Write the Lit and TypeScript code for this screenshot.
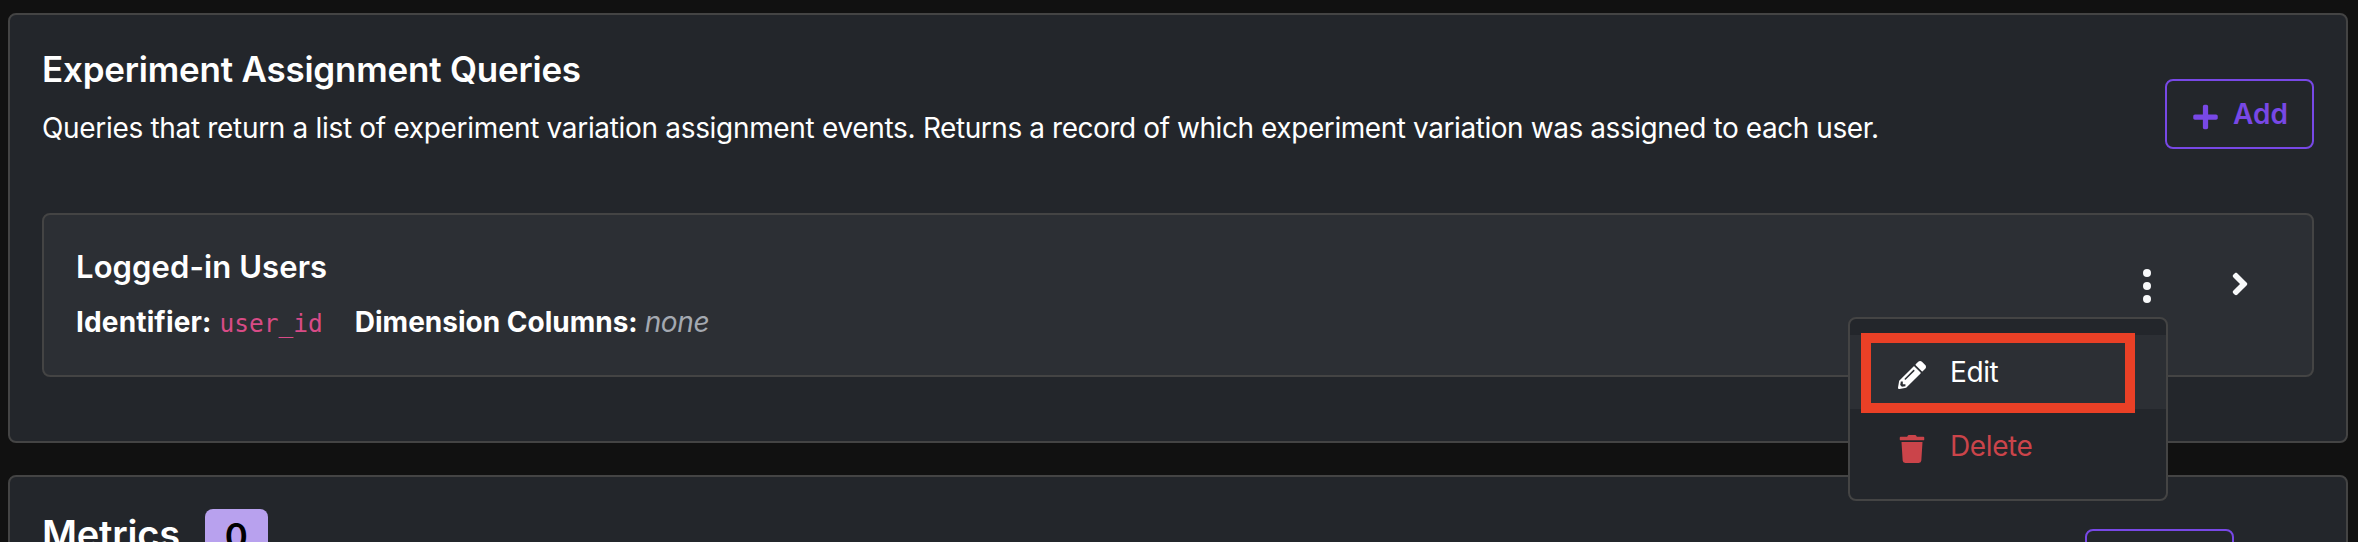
import { LitElement, html, css, svg } from "lit";
import { customElement } from "lit/decorators.js";

const icons = {
  plus: svg`<path d="M416 208H272V64c0-17.67-14.33-32-32-32h-32c-17.67 0-32 14.33-32 32v144H32c-17.67 0-32 14.33-32 32v32c0 17.67 14.33 32 32 32h144v144c0 17.67 14.33 32 32 32h32c17.67 0 32-14.33 32-32V304h144c17.67 0 32-14.33 32-32v-32c0-17.67-14.33-32-32-32z"/>`,
  pencil: svg`<path d="M497.9 142.1l-46.1 46.1c-4.7 4.7-12.3 4.7-17 0l-111-111c-4.7-4.7-4.7-12.3 0-17l46.1-46.1c18.7-18.7 49.1-18.7 67.9 0l60.1 60.1c18.8 18.7 18.8 49.1 0 67.9zM284.2 99.8L21.6 362.4.4 483.9c-2.9 16.4 11.4 30.6 27.8 27.8l121.5-21.3 262.6-262.6c4.7-4.7 4.7-12.3 0-17l-111-111c-4.8-4.7-12.4-4.7-17.1 0zM124.1 339.9c-5.5-5.5-5.5-14.3 0-19.8l154-154c5.5-5.5 14.3-5.5 19.8 0s5.5 14.3 0 19.8l-154 154c-5.5 5.5-14.3 5.5-19.8 0zM88 424h48v36.3l-64.5 11.3-31.1-31.1L51.7 376H88v48z"/>`,
  trash: svg`<path d="M432 32H312l-9.4-18.7A24 24 0 0 0 281.1 0H166.8a23.72 23.72 0 0 0-21.4 13.3L136 32H16A16 16 0 0 0 0 48v32a16 16 0 0 0 16 16h416a16 16 0 0 0 16-16V48a16 16 0 0 0-16-16zM53.2 467a48 48 0 0 0 47.9 45h245.8a48 48 0 0 0 47.9-45L416 128H32z"/>`,
  angle: svg`<path d="M224.3 273l-136 136c-9.4 9.4-24.6 9.4-33.9 0l-22.6-22.6c-9.4-9.4-9.4-24.6 0-33.9l96.4-96.4-96.4-96.4c-9.4-9.4-9.4-24.6 0-33.9L54.3 103c9.4-9.4 24.6-9.4 33.9 0l136 136c9.5 9.4 9.5 24.6.1 34z"/>`,
};

@customElement("app-root")
export class AppRoot extends LitElement {
  static styles = css`
    :host {
      display: block;
      height: 542px;
      overflow: hidden;
      background: #111111;
      color: #ffffff;
      font-family: Inter, sans-serif;
      font-size: 28px;
      line-height: 42px;
    }
    * { box-sizing: border-box; }
    svg { display: block; fill: currentColor; flex: none; }
    .page {
      padding: 13px 10px 0 8px;
      display: flex;
      flex-direction: column;
      gap: 32px;
      height: 542px;
      overflow: hidden;
    }
    .card {
      flex: none;
      border: 2px solid #444444;
      border-radius: 8px;
      background: #23262b;
      padding: 32px 32px 0;
    }
    .queries { height: 430px; }
    .metrics { height: 200px; padding-right: 112px; }
    .head { display: flex; justify-content: space-between; height: 166px; white-space: nowrap; }
    .title { font-size: 35px; font-weight: 600; letter-spacing: -0.22px; line-height: 42px; margin-top: 1px; }
    .lead { margin-top: 17px; letter-spacing: -0.43px; }
    .lead .intro { letter-spacing: -0.32px; }
    .btn {
      display: flex;
      align-items: center;
      width: 149px;
      height: 70px;
      border: 2px solid #7848e6;
      border-radius: 8px;
      color: #7848e6;
      font-weight: 600;
      padding-left: 26px;
      gap: 15px;
    }
    .queries .btn { margin-top: 32px; }
    .btn svg { width: 25px; height: 28px; margin-top: 6px; }
    .btn span { margin-top: -1px; }
    .row {
      position: relative;
      display: flex;
      height: 164px;
      border: 2px solid #444444;
      border-radius: 8px;
      background: #2c2f34;
      padding: 31px 32px 0;
      white-space: nowrap;
    }
    .info { flex: 1; }
    .name { font-size: 31px; font-weight: 600; letter-spacing: 0.1px; line-height: 42px; }
    .meta { display: flex; align-items: baseline; margin-top: 13px; }
    .meta b { font-weight: 700; }
    .meta b:first-child { letter-spacing: 0.15px; }
    .code { font-family: "DejaVu Sans Mono", monospace; font-size: 24.5px; color: #d84b86; margin: 0 32px 0 8px; }
    .none { font-style: italic; color: #a4a9b1; margin-left: 7px; letter-spacing: -0.38px; }
    .actions { display: flex; color: #f8f9fa; }
    .kebab { width: 8px; height: 34px; margin-top: 23px; }
    .angle { width: 18px; height: 38px; margin: 19px 31px 0 80px; }
    .menu {
      position: absolute;
      left: 1804px;
      top: 102px;
      width: 320px;
      height: 184px;
      border: 2px solid #444444;
      border-radius: 8px;
      background: #23262b;
      padding-top: 16px;
      z-index: 2;
    }
    .item { display: flex; align-items: center; height: 74px; padding-left: 48px; letter-spacing: -0.38px; }
    .item svg { width: 28px; height: 28px; margin-top: 6px; }
    .item span { margin-left: 24px; }
    .active { background: #2c2f34; }
    .danger { color: #cb444a; }
    .mark {
      position: absolute;
      left: 11px;
      top: 14px;
      width: 274px;
      height: 80px;
      border: 10px solid #ea4026;
    }
    .metrics .head { height: 66px; }
    .heading { display: flex; }
    .heading .title { margin-top: 4px; font-size: 38px; }
    .badge {
      width: 63px;
      height: 52px;
      border-radius: 8px;
      background: #b8a1ee;
      color: #000000;
      font-size: 35px;
      font-weight: 600;
      text-align: center;
      line-height: 54px;
      margin-left: 25px;
    }
    .metrics .btn { margin-top: 20px; }
  `;

  private addButton() {
    return html`<div class="btn">
      <svg viewBox="0 0 448 512">${icons.plus}</svg><span>Add</span>
    </div>`;
  }

  render() {
    return html`
      <div class="page">
        <section class="card queries">
          <div class="head">
            <div>
              <div class="title">Experiment Assignment Queries</div>
              <div class="lead"><span class="intro">Queries that return a list of experiment variation assignment events. </span>Returns a record of which experiment variation was assigned to each user.</div>
            </div>
            ${this.addButton()}
          </div>
          <div class="row">
            <div class="info">
              <div class="name">Logged-in Users</div>
              <div class="meta"><b>Identifier:</b><span class="code">user_id</span><b>Dimension Columns:</b><span class="none">none</span></div>
            </div>
            <div class="actions">
              <svg class="kebab" viewBox="0 0 8 34"><circle cx="4" cy="4" r="4"/><circle cx="4" cy="17" r="4"/><circle cx="4" cy="30" r="4"/></svg>
              <svg class="angle" viewBox="0 0 256 512">${icons.angle}</svg>
            </div>
            <div class="menu">
              <div class="item active"><svg viewBox="0 0 512 512">${icons.pencil}</svg><span>Edit</span></div>
              <div class="item danger"><svg viewBox="0 0 448 512">${icons.trash}</svg><span>Delete</span></div>
              <div class="mark"></div>
            </div>
          </div>
        </section>
        <section class="card metrics">
          <div class="head">
            <div class="heading"><div class="title">Metrics</div><div class="badge">0</div></div>
            ${this.addButton()}
          </div>
        </section>
      </div>
    `;
  }
}
